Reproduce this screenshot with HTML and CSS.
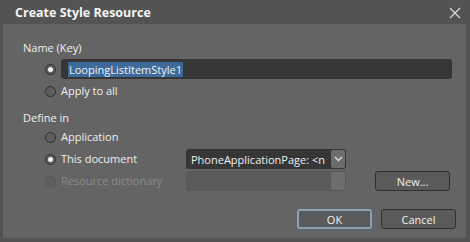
FILE: index.html
```html
<!DOCTYPE html>
<html>
<head>
<meta charset="utf-8">
<link rel="stylesheet" href="styles.css">
</head>
<body>
<div class="dialog">
  <div class="titlebar">
    <span class="title">Create Style Resource</span>
    <svg class="close" width="12" height="12" viewBox="0 0 12 12"><path d="M1 1L11 11M11 1L1 11" stroke="#d8d8d8" stroke-width="1.3" fill="none"/></svg>
  </div>
  <div class="body">
    <div class="label">Name (Key)</div>
    <div class="row row-name">
      <span class="radio checked"></span>
      <div class="textbox"><span class="sel">LoopingListItemStyle1</span></div>
    </div>
    <div class="row">
      <span class="radio"></span><span class="opt">Apply to all</span>
    </div>
    <div class="label label2">Define in</div>
    <div class="row">
      <span class="radio"></span><span class="opt">Application</span>
    </div>
    <div class="row row-doc">
      <span class="radio checked"></span><span class="opt optw">This document</span>
      <div class="combo"><span class="combo-text">PhoneApplicationPage: &lt;n</span>
        <span class="drop"><svg width="9" height="6" viewBox="0 0 9 6"><path d="M1 1L4.5 4.5L8 1" stroke="#e0e0e0" stroke-width="1.4" fill="none"/></svg></span>
      </div>
    </div>
    <div class="row row-dict">
      <span class="radio disabled"></span><span class="opt optw dis">Resource dictionary</span>
      <div class="combo combo-dis"><span class="drop drop-dis"></span></div>
      <button class="btn btn-new">New...</button>
    </div>
    <div class="footer">
      <button class="btn btn-ok">OK</button>
      <button class="btn">Cancel</button>
    </div>
  </div>
</div>
</body>
</html>
```
FILE: styles.css
```css
* { box-sizing: border-box; }
html, body { margin: 0; padding: 0; }
body {
  width: 470px; height: 242px; overflow: hidden;
  background: #535353;
  font-family: "Open Sans", "Noto Sans", sans-serif;
  font-size: 11px;
  color: #efefef;
}
.dialog {
  width: 470px; height: 242px;
  background: #535353;
  display: flex; flex-direction: column;
  padding: 0 4px 4px 3px;
}
.titlebar {
  height: 24px;
  display: flex; align-items: center; justify-content: space-between;
  padding: 0 5px 0 12px;
}
.title { font-weight: bold; font-size: 12.5px; color: #f4f4f4; }
.close { margin-top: 1px; }
.body {
  flex: 1;
  background: #646464;
  padding: 15px 0 0 20px;
}
.label { height: 17px; line-height: 17px; }
.label2 { margin-top: 7px; }
.row { display: flex; align-items: center; height: 22px; padding-left: 22px; }
.row-name { margin-top: 2px; height: 22px; }
.radio {
  width: 11px; height: 11px; border-radius: 50%;
  border: 1px solid #2e2e2e;
  background: #5e5e5e;
  margin-right: 5px;
  flex: none;
  position: relative;
}
.radio.checked::after {
  content: ""; position: absolute; left: 2px; top: 2px;
  width: 5px; height: 5px; border-radius: 50%; background: #f4f4f4;
}
.radio.disabled { border-color: #555; background: #606060; }
.textbox {
  margin-left: 0;
  width: 391px; height: 20px;
  background: #363636;
  border-radius: 3px;
  display: flex; align-items: center;
  padding-left: 7px;
}
.sel { background: #3d6a9b; color: #f2f2f2; line-height: 15px; padding: 0 1px; }
.opt { line-height: 16px; white-space: nowrap; }
.optw { width: 125px; }
.dis { color: #8a8a8a; }
.combo {
  width: 160px; height: 20px;
  background: #363636;
  border-radius: 3px;
  display: flex; align-items: center; justify-content: space-between;
  padding-left: 5px; padding-right: 1px;
  flex: none;
}
.combo-text { color: #f0f0f0; white-space: nowrap; overflow: hidden; flex: 1; }
.drop {
  width: 14px; height: 18px; background: #6c6c6c; border-radius: 2px;
  display: flex; align-items: center; justify-content: center;
  flex: none;
}
.combo-dis { background: #5a5a5a; }
.drop-dis { background: #6d6d6d; margin-left: auto; }
.btn {
  width: 75px; height: 20px;
  background: #5a5a5a;
  border: 1px solid #303030;
  border-radius: 3px;
  color: #f0f0f0;
  font-family: inherit; font-size: 11px;
  padding: 0;
  flex: none;
}
.btn-new { margin-left: 29px; }
.footer {
  display: flex; justify-content: flex-end; gap: 9px;
  padding-right: 10px; margin-top: 17px;
}
.btn-ok { border: 2px solid #8aa0b3; }
```
